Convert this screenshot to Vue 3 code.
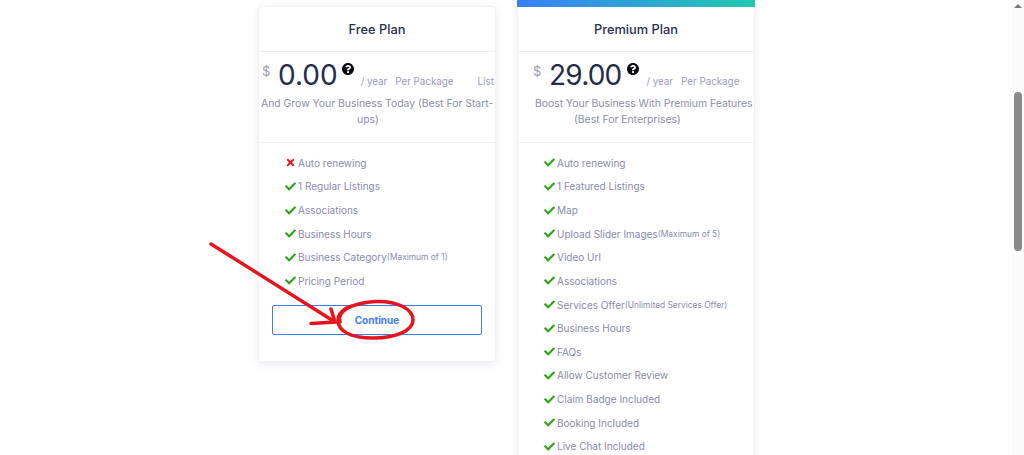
<script setup>
const freeRows = [
  { label: "Auto renewing", off: true },
  { label: "1 Regular Listings" },
  { label: "Associations" },
  { label: "Business Hours" },
  { label: "Business Category", note: "(Maximum of 1)" },
  { label: "Pricing Period" },
];

const premiumRows = [
  { label: "Auto renewing" },
  { label: "1 Featured Listings" },
  { label: "Map" },
  { label: "Upload Slider Images", note: "(Maximum of 5)" },
  { label: "Video Url" },
  { label: "Associations" },
  { label: "Services Offer", note: "(Unlimited Services Offer)" },
  { label: "Business Hours" },
  { label: "FAQs" },
  { label: "Allow Customer Review" },
  { label: "Claim Badge Included" },
  { label: "Booking Included" },
  { label: "Live Chat Included" },
];

const helpPath = "M504 256c0 137-111 248-248 248S8 393 8 256 119 8 256 8s248 111 248 248zM262.650 90c-54.490 0-89.250 22.950-116.540 63.750-3.540 5.290-2.360 12.420 2.710 16.270l34.680 26.300c5.200 3.940 12.610 3.010 16.660-2.130 17.850-22.640 30.090-35.770 57.260-35.770 20.410 0 45.660 13.140 45.660 32.940 0 14.970-12.360 22.650-32.520 33.960C247.080 238.490 216 254.880 216 296v4c0 6.630 5.370 12 12 12h56c6.630 0 12-5.370 12-12v-1.330c0-28.500 83.310-29.690 83.310-106.800C379.310 134.100 319.370 90 262.650 90zM256 336c-25.400 0-46.060 20.660-46.060 46.060 0 25.400 20.660 46.060 46.060 46.060s46.060-20.660 46.060-46.060c0-25.400-20.660-46.060-46.060-46.060z";
const checkPath = "M173.898 439.404l-166.400-166.400c-9.997-9.997-9.997-26.206 0-36.204l36.203-36.204c9.997-9.998 26.207-9.998 36.204 0L192 312.690 432.095 72.596c9.997-9.997 26.207-9.997 36.204 0l36.203 36.204c9.997 9.997 9.997 26.206 0 36.204l-294.400 294.401c-9.998 9.997-26.207 9.997-36.204-.001z";
const timesPath = "M242.720 256l100.070-100.070c12.280-12.280 12.280-32.190 0-44.480l-22.240-22.240c-12.280-12.280-32.190-12.280-44.480 0L176 189.280 75.930 89.210c-12.280-12.280-32.190-12.280-44.480 0L9.210 111.450c-12.280 12.280-12.280 32.190 0 44.480L109.280 256 9.210 356.070c-12.280 12.280-12.280 32.190 0 44.480l22.240 22.240c12.280 12.280 32.200 12.280 44.480 0L176 322.720l100.070 100.070c12.280 12.280 32.200 12.280 44.480 0l22.240-22.240c12.280-12.280 12.280-32.190 0-44.480L242.720 256z";
</script>

<template>
  <div class="page">
    <main class="plans">
      <section class="card free">
        <h2>Free Plan</h2>
        <div class="price">
          <span class="dollar">$</span>
          <span class="amount">0.00</span>
          <svg class="help" viewBox="8 8 496 496"><path :d="helpPath" /></svg>
          <span class="term">/ year</span>
          <span class="term per">Per Package</span>
          <span class="term list">List</span>
        </div>
        <p class="blurb">
          <span class="line">And Grow Your Business Today (Best For Start-</span>
          <span class="line second">ups)</span>
        </p>
        <ul class="features">
          <li v-for="row in freeRows" :key="row.label">
            <svg v-if="row.off" class="mark cross" viewBox="0 0 352 512"><path :d="timesPath" /></svg>
            <svg v-else class="mark tick" viewBox="0 0 512 512"><path :d="checkPath" /></svg>
            <span>{{ row.label }}</span><small v-if="row.note">{{ row.note }}</small>
          </li>
        </ul>
        <button class="continue">Continue</button>
      </section>

      <section class="card premium">
        <div class="stripe"></div>
        <h2>Premium Plan</h2>
        <div class="price">
          <span class="dollar">$</span>
          <span class="amount">29.00</span>
          <svg class="help" viewBox="8 8 496 496"><path :d="helpPath" /></svg>
          <span class="term">/ year</span>
          <span class="term per">Per Package</span>
        </div>
        <p class="blurb">
          <span class="line">Boost Your Business With Premium Features</span>
          <span class="line second">(Best For Enterprises)</span>
        </p>
        <ul class="features">
          <li v-for="row in premiumRows" :key="row.label">
            <svg class="mark tick" viewBox="0 0 512 512"><path :d="checkPath" /></svg>
            <span>{{ row.label }}</span><small v-if="row.note">{{ row.note }}</small>
          </li>
        </ul>
      </section>
    </main>

    <aside class="scrollbar">
      <span class="up"></span>
      <span class="thumb"></span>
    </aside>

    <!-- red marker scribble drawn over the screenshot -->
    <svg class="scribble" viewBox="0 0 1024 455">
      <path d="M211 244 L335 322 M311 323.500 L336 322 M331 309 L335 322" />
      <path d="M340 322 C336 311 352 303 376 301.500 C398 301 413 309 413 320 C413 331 395 338 373 338 C352 338 338 332 338 320 C338 314 344 308 352 306" />
    </svg>
  </div>
</template>

<style scoped>
.page {
  position: relative;
  display: flex;
  height: 455px;
  overflow: hidden;
  background: #fff;
  font-family: Inter, "Open Sans", sans-serif;
}

.plans {
  flex: 1;
  display: flex;
  align-items: flex-start;
  gap: 21px;
  padding-left: 258px;
}

.card {
  flex: none;
  box-sizing: border-box;
  width: 238px;
  background: #fff;
  border: 1px solid #f0f0f8;
}

.free {
  margin-top: 6px;
  height: 356px;
  border-radius: 4px;
  box-shadow: 0 2px 8px rgba(60, 60, 120, 0.1);
}

.premium {
  border-top: 0;
  box-shadow: 0 0 8px rgba(60, 60, 120, 0.07);
}

.stripe {
  height: 7px;
  margin: 0 -1px;
  background: linear-gradient(90deg, #3a7ff6, #21c9b0);
}

h2 {
  box-sizing: border-box;
  margin: 0;
  height: 45px;
  line-height: 45px;
  text-align: center;
  font-size: 12.800px;
  font-weight: 500;
  color: #2b3050;
  border-bottom: 1px solid #eeeef6;
}

.price {
  display: flex;
  height: 44px;
  white-space: nowrap;
  color: #9a9ab8;
}

.free .price {
  padding-left: 3px;
}

.premium .price {
  padding-left: 15px;
}

.dollar {
  margin-top: 10px;
  font-size: 13px;
  line-height: 18px;
  width: 16px;
}

.amount {
  font-size: 28px;
  line-height: 46px;
  color: #252b4a;
}

.premium .amount {
  letter-spacing: -0.8px;
}

.help {
  flex: none;
  width: 12px;
  height: 12px;
  margin: 11px 7px 0 4px;
  fill: #0b0b10;
}

.premium .help {
  margin-left: 6px;
}

.term {
  font-size: 9.800px;
  line-height: 14px;
  margin-top: 23px;
}

.per {
  margin-left: 8px;
}

.list {
  margin-left: 24px;
}

.blurb {
  box-sizing: border-box;
  margin: 0;
  height: 47px;
  font-size: 10.400px;
  line-height: 16px;
  color: #8c8cac;
  white-space: nowrap;
  border-bottom: 1px solid #f0f0f6;
}

.line {
  display: block;
}

.free .line {
  padding-left: 2px;
}

.free .second {
  padding-left: 98px;
}

.premium .line {
  padding-left: 17px;
}

.premium .second {
  padding-left: 56px;
}

.features {
  list-style: none;
  margin: 0;
  padding: 8px 0 0 26px;
}

.features li {
  display: flex;
  align-items: center;
  height: 23.640px;
  font-size: 10px;
  color: #8a8aac;
  white-space: nowrap;
}

.features small {
  font-size: 8.400px;
}

.mark {
  flex: none;
  width: 11px;
  height: 11px;
  margin-right: 2px;
}

.tick {
  fill: #2fa51a;
}

.cross {
  fill: #f5101c;
}

.continue {
  display: block;
  width: 210px;
  height: 30px;
  margin: 12px 0 0 13px;
  background: #fff;
  border: 1px solid #3f7cf0;
  border-radius: 2px;
  color: #3f7cf0;
  font-family: inherit;
  font-size: 10px;
  font-weight: 700;
}

.scrollbar {
  position: relative;
  flex: none;
  width: 12px;
  background: #fbfbfb;
}

.up {
  position: absolute;
  top: 4px;
  left: 2px;
  border: 4px solid transparent;
  border-top: 0;
  border-bottom-color: #7a7a7a;
}

.thumb {
  position: absolute;
  top: 92px;
  left: 2px;
  width: 8px;
  height: 159px;
  border-radius: 4px;
  background: #8a8a8a;
}

.scribble {
  position: absolute;
  inset: 0;
  width: 1024px;
  height: 455px;
  fill: none;
  stroke: #e8141c;
  stroke-width: 3.500;
  stroke-linecap: round;
  pointer-events: none;
}
</style>

<style>
html,
body {
  overflow: hidden;
}
</style>
